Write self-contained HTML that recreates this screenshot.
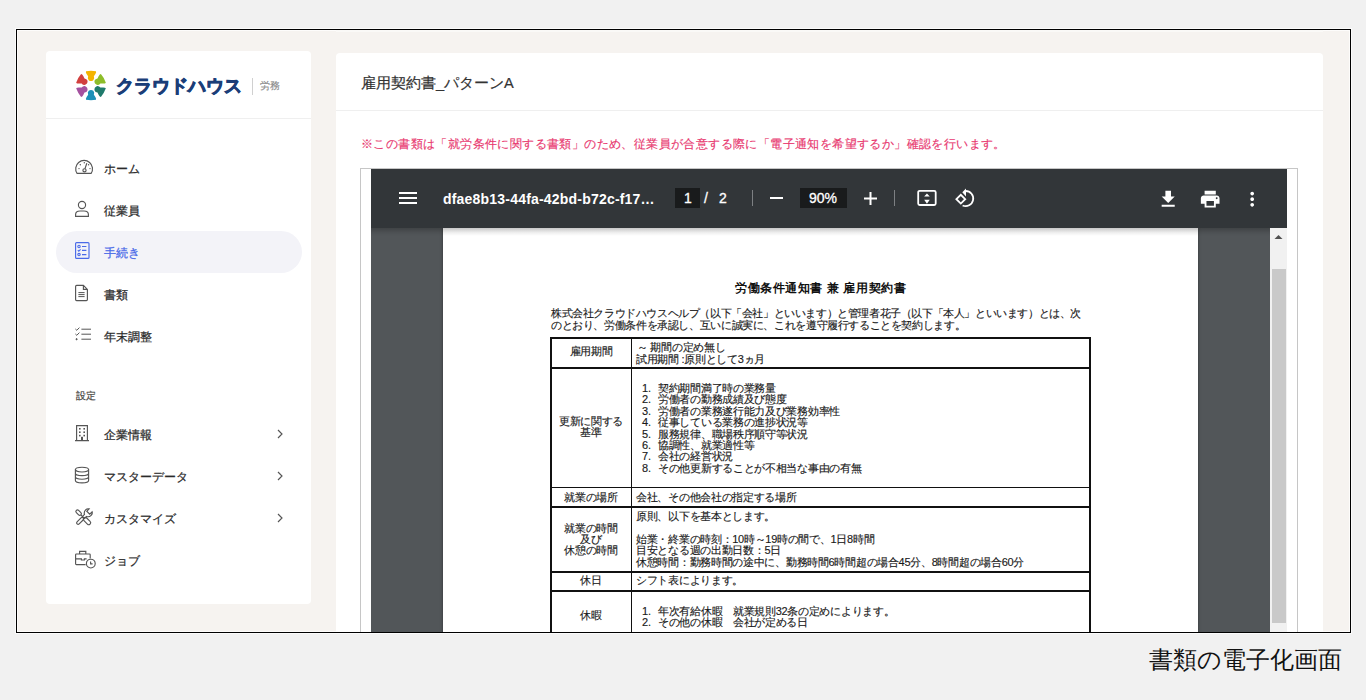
<!DOCTYPE html>
<html><head><meta charset="utf-8">
<style>
*{margin:0;padding:0;box-sizing:border-box}
html,body{width:1366px;height:700px;overflow:hidden;background:#f1f1f1;font-family:"Liberation Sans",sans-serif;color:#333}
.a{position:absolute;white-space:nowrap}
#frame{position:absolute;left:16px;top:29px;width:1335px;height:604px;border:1px solid #000;background:#f6f3f0;box-shadow:0 0 0 1px #fbfbfb, inset 0 0 0 1px #fdfcfb}
#clip{position:absolute;left:0;top:0;width:1366px;height:700px;clip-path:inset(30px 16px 68px 17px)}
.card{position:absolute;background:#fff;border-radius:4px}
.nav{font-size:12.2px;line-height:13px;font-weight:normal;-webkit-text-stroke:0.25px currentColor;color:#2a2a2a;left:104px}
.ico{position:absolute;fill:none;stroke:#555;stroke-width:1.15}
.doc{font-size:11px;line-height:11.4px;letter-spacing:-0.3px;color:#1a1a1a;-webkit-text-stroke:0.15px #1a1a1a}
.ctr{text-align:center;width:80px;left:551px}
.hl{position:absolute;left:551px;width:540px;height:1.5px;background:#111}
.vl{position:absolute;width:1.5px;background:#111}
.tb{fill:#fff}
.n{display:inline-block;width:16px;letter-spacing:0}
</style></head><body>
<div id="frame"></div>
<div id="clip">
  <!-- faint strip at top -->
  <div class="a" style="left:336px;top:30px;width:987px;height:2px;background:#faf9f7"></div>
  <!-- sidebar -->
  <div class="card" style="left:46px;top:51px;width:264.5px;height:552.5px"></div>
  <svg class="a" style="left:75.6px;top:69.5px" width="30" height="31" viewBox="-15.75 -16.25 31.5 32.5">
    <defs><path id="pp" d="M-5.2,-15 Q0,-16 5.2,-15 Q5.8,-14 4.6,-12 L3,-9.6 Q4,-7.4 2.4,-5.6 Q0,-3.8 -2.4,-5.6 Q-4,-7.4 -3,-9.6 L-4.6,-12 Q-5.8,-14 -5.2,-15Z"/></defs>
    <use href="#pp" fill="#f4b400"/>
    <use href="#pp" fill="#8dbd2a" transform="rotate(60)"/>
    <use href="#pp" fill="#1f7a6c" transform="rotate(120)"/>
    <use href="#pp" fill="#1b90b8" transform="rotate(180)"/>
    <use href="#pp" fill="#a4519f" transform="rotate(240)"/>
    <use href="#pp" fill="#d2403f" transform="rotate(300)"/>
  </svg>
  <div class="a" style="left:116px;top:77px;font-size:18px;line-height:18px;font-weight:bold;color:#1b3e78;letter-spacing:0px;-webkit-text-stroke:0.9px #1b3e78">クラウドハウス</div>
  <div class="a" style="left:252px;top:78px;width:1px;height:17px;background:#d0d0d0"></div>
  <div class="a" style="left:260px;top:81px;font-size:10px;line-height:10px;color:#8a8a8a;-webkit-text-stroke:0.15px #8a8a8a">労務</div>
  <div class="a" style="left:46px;top:118px;width:265px;height:1px;background:#efefef"></div>

  <!-- nav -->
  <svg class="ico" style="left:74px;top:158px" width="21" height="18" viewBox="0 0 21 18">
    <path d="M3.0,15.3 A8.4,8.4 0 1 1 17.2,15.3 Z"/>
    <circle cx="10.5" cy="12.3" r="1.6"/><path d="M11,10.7 L12.8,5.2"/>
    <g fill="#555" stroke="none"><circle cx="5" cy="10.6" r=".7"/><circle cx="6.3" cy="6.8" r=".7"/><circle cx="10.3" cy="4.8" r=".7"/><circle cx="14.6" cy="6.8" r=".7"/><circle cx="16" cy="10.6" r=".7"/></g>
  </svg>
  <div class="a nav" style="top:163px">ホーム</div>

  <svg class="ico" style="left:74px;top:200px" width="16" height="18" viewBox="0 0 16 18">
    <circle cx="8" cy="5" r="3.6"/><path d="M1.6,16.4 L1.6,14.6 Q1.6,11 6,11 L10,11 Q14.4,11 14.4,14.6 L14.4,16.4Z"/>
  </svg>
  <div class="a nav" style="top:205px">従業員</div>

  <div class="a" style="left:56px;top:231px;width:246px;height:42px;border-radius:21px;background:#f3f3f8"></div>
  <svg class="ico" style="left:74px;top:241px;stroke:#4a6ae8" width="16" height="19" viewBox="0 0 16 19">
    <rect x="1.6" y="1.6" width="13.4" height="15.8" rx="1"/>
    <g stroke-width="1.1"><circle cx="5" cy="5.5" r="1.2"/><path d="M3.8,9.2 L4.8,10.2 L6.6,8.4"/><circle cx="5" cy="13.6" r="1.2"/><path d="M8,5.5 H12.4 M8,9.4 H12.4 M8,13.6 H12.4"/></g>
  </svg>
  <div class="a nav" style="top:247px;color:#4a6ae8">手続き</div>

  <svg class="ico" style="left:74px;top:284px" width="15" height="18" viewBox="0 0 15 18">
    <path d="M1.6,2.4 Q1.6,1.4 2.6,1.4 L9.4,1.4 L13.4,5.4 L13.4,15.6 Q13.4,16.6 12.4,16.6 L2.6,16.6 Q1.6,16.6 1.6,15.6Z M9.4,1.4 L9.4,5.4 L13.4,5.4"/>
    <path d="M4.4,8.6 H10.6 M4.4,10.6 H10.6 M4.4,12.6 H10.6" stroke-width="1"/>
  </svg>
  <div class="a nav" style="top:289px">書類</div>

  <svg class="ico" style="left:74px;top:326px;stroke-width:1" width="18" height="16" viewBox="0 0 18 16">
    <path d="M1.4,3 L2.8,4.3 L5.4,1.6 M1.4,8 L2.8,9.3 L5.4,6.6 M7.4,3.2 H17 M7.4,8.2 H17 M7.4,13.2 H17"/>
    <circle cx="2.6" cy="13.2" r=".6" fill="#555"/>
  </svg>
  <div class="a nav" style="top:331px">年末調整</div>

  <div class="a" style="left:76px;top:391px;font-size:10px;line-height:10px;color:#4a4a45;-webkit-text-stroke:0.2px #4a4a45">設定</div>

  <svg class="ico" style="left:74px;top:424px" width="16" height="18" viewBox="0 0 16 18">
    <path d="M2.6,16.4 V1.6 H13.4 V16.4 M1,16.6 H15"/>
    <g fill="#555" stroke="none"><rect x="5" y="4" width="1.6" height="1.6"/><rect x="9.4" y="4" width="1.6" height="1.6"/><rect x="5" y="7.4" width="1.6" height="1.6"/><rect x="9.4" y="7.4" width="1.6" height="1.6"/><rect x="5" y="10.8" width="1.6" height="1.6"/><rect x="9.4" y="10.8" width="1.6" height="1.6"/><rect x="7" y="12.8" width="2" height="3.8"/></g>
  </svg>
  <div class="a nav" style="top:429px">企業情報</div>
  <svg class="ico" style="left:275px;top:428px" width="10" height="12" viewBox="0 0 10 12"><path d="M3,2 L7,6 L3,10"/></svg>

  <svg class="ico" style="left:74px;top:466px" width="16" height="18" viewBox="0 0 16 18">
    <ellipse cx="8" cy="3.6" rx="6.6" ry="2.4"/><path d="M1.4,3.6 V14.4 A6.6,2.4 0 0 0 14.6,14.4 V3.6 M1.4,7.2 A6.6,2.4 0 0 0 14.6,7.2 M1.4,10.8 A6.6,2.4 0 0 0 14.6,10.8"/>
  </svg>
  <div class="a nav" style="top:471px">マスターデータ</div>
  <svg class="ico" style="left:275px;top:470px" width="10" height="12" viewBox="0 0 10 12"><path d="M3,2 L7,6 L3,10"/></svg>

  <svg class="ico" style="left:74px;top:508px" width="19" height="19" viewBox="0 0 19 19">
    <g transform="rotate(-45 9.5 9.5)">
      <rect x="7.9" y="-0.6" width="3.2" height="6.4" rx="1.6"/>
      <path d="M9.5,5.8 V10.2"/>
      <rect x="7.6" y="10.2" width="3.8" height="8.6" rx="1.9"/>
    </g>
    <g transform="rotate(45 9.5 9.5)">
      <rect x="8" y="10" width="3" height="8.6" rx="1.5"/>
      <path d="M8,10 V6.6 Q5.6,5.4 5.6,2.6 Q5.6,0.4 7.4,-0.6 V2.8 H11.6 V-0.6 Q13.4,0.4 13.4,2.6 Q13.4,5.4 11,6.6 V10"/>
    </g>
  </svg>
  <div class="a nav" style="top:513px">カスタマイズ</div>
  <svg class="ico" style="left:275px;top:512px" width="10" height="12" viewBox="0 0 10 12"><path d="M3,2 L7,6 L3,10"/></svg>

  <svg class="ico" style="left:74px;top:550px" width="22" height="19" viewBox="0 0 22 19">
    <path d="M11.6,14.6 H2.4 Q1.6,14.6 1.6,13.8 V4.8 Q1.6,4 2.4,4 H15.4 Q16.2,4 16.2,4.8 V8.4 M5.6,4 V1.4 H11.8 V4 M1.6,8.8 H7.4 V10 H10.4 V8.8 H12.6"/>
    <circle cx="16.8" cy="13.6" r="4.4"/><path d="M16.6,11.4 V13.8 H18.6"/>
  </svg>
  <div class="a nav" style="top:555px">ジョブ</div>

  <!-- main card -->
  <div class="card" style="left:336px;top:53px;width:987px;height:640px"></div>
  <div class="a" style="left:361px;top:75.5px;font-size:14.6px;line-height:15px;color:#333;-webkit-text-stroke:0.2px #333">雇用契約書_パターンA</div>
  <div class="a" style="left:336px;top:110px;width:987px;height:1px;background:#efefef"></div>
  <div class="a" style="left:361px;top:138px;font-size:12px;line-height:13px;letter-spacing:0.4px;color:#e8386f;-webkit-text-stroke:0.15px #e8386f">※この書類は「就労条件に関する書類」のため、従業員が合意する際に「電子通知を希望するか」確認を行います。</div>

  <!-- PDF viewer -->
  <div class="a" style="left:360px;top:168px;width:938px;height:500px;border:1px solid #c6c6c6;background:#fff"></div>
  <div class="a" style="left:371px;top:228px;width:900px;height:420px;background:#525659"></div>
  <div class="a" style="left:443px;top:228px;width:755px;height:420px;background:#fff;box-shadow:0 0 3px rgba(0,0,0,.4)"></div>
  <!-- scrollbar -->
  <div class="a" style="left:1270px;top:228px;width:17px;height:420px;background:#f1f1f1"></div>
  <div class="a" style="left:1272px;top:269px;width:14px;height:354px;background:#c9c9c9"></div>
  <svg class="a" style="left:1270px;top:230px" width="17" height="12"><path d="M4.5,9 L8.5,5 L12.5,9Z" fill="#505050"/></svg>
  <!-- toolbar -->
  <div class="a" style="left:371px;top:169px;width:916px;height:59px;background:#323639"></div>
  <div class="a" style="left:371px;top:228px;width:899px;height:8px;background:linear-gradient(rgba(0,0,0,.22),rgba(0,0,0,.06) 60%,rgba(0,0,0,0))"></div>
  <svg class="a tb" style="left:396px;top:186px" width="24" height="24" viewBox="0 0 24 24"><path d="M3,18h18v-2H3v2zm0-5h18v-2H3v2zm0-7v2h18V6H3z"/></svg>
  <div class="a" style="left:443px;top:190.5px;font-size:14px;line-height:16px;font-weight:bold;color:#fff;letter-spacing:0.2px">dfae8b13-44fa-42bd-b72c-f17…</div>
  <div class="a" style="left:675px;top:188px;width:25px;height:20px;background:#191b1c"></div>
  <div class="a" style="left:684px;top:190px;font-size:14px;line-height:16px;color:#fff;-webkit-text-stroke:0.3px #fff">1</div>
  <div class="a" style="left:704px;top:190px;font-size:14px;line-height:16px;color:#fff;-webkit-text-stroke:0.3px #fff">/</div>
  <div class="a" style="left:719px;top:190px;font-size:14px;line-height:16px;color:#fff;-webkit-text-stroke:0.3px #fff">2</div>
  <div class="a" style="left:752px;top:190px;width:1px;height:16px;background:#7d8083"></div>
  <div class="a" style="left:770px;top:197px;width:13px;height:2px;background:#fff"></div>
  <div class="a" style="left:800px;top:188px;width:47px;height:20px;background:#191b1c"></div>
  <div class="a" style="left:809px;top:190px;font-size:14px;line-height:16px;color:#fff;-webkit-text-stroke:0.3px #fff">90%</div>
  <svg class="a tb" style="left:862px;top:190px" width="17" height="17" viewBox="0 0 17 17"><path d="M7.5,2h2v5.5H15v2H9.5V15h-2V9.5H2v-2h5.5z"/></svg>
  <div class="a" style="left:894px;top:190px;width:1px;height:16px;background:#7d8083"></div>
  <svg class="a" style="left:915px;top:188px" width="24" height="21" viewBox="0 0 24 21">
    <rect x="3.2" y="2.8" width="17.5" height="14.2" rx="1.5" fill="none" stroke="#fff" stroke-width="1.8"/>
    <path d="M11.95,5.5 L14.75,8.6 H9.15Z M11.95,15.7 L14.75,11.7 H9.15Z" fill="#fff"/>
  </svg>
  <svg class="a" style="left:953px;top:186px" width="24" height="24" viewBox="0 0 24 24">
    <path d="M3.4,13.2 L7.8,8.8 L12.2,13.2 L7.8,17.6Z" fill="none" stroke="#fff" stroke-width="1.8"/>
    <path d="M12.65,5 A7.55,7.55 0 1 1 9.6,19.45" fill="none" stroke="#fff" stroke-width="1.8"/>
    <path d="M9.3,6.2 L13,2.4 L13,10.6Z" fill="#fff"/>
  </svg>
  <svg class="a tb" style="left:1156.6px;top:188px" width="22.4" height="22.4" viewBox="0 0 24 24"><path d="M19 9h-4V3H9v6H5l7 7 7-7zM5 18v2h14v-2H5z"/></svg>
  <svg class="a tb" style="left:1198.8px;top:187.6px" width="22.4" height="22.4" viewBox="0 0 24 24"><path d="M19 8H5c-1.66 0-3 1.34-3 3v6h4v4h12v-4h4v-6c0-1.66-1.34-3-3-3zm-3 11H8v-5h8v5zm3-7c-.55 0-1-.45-1-1s.45-1 1-1 1 .45 1 1-.45 1-1 1zm1-9H6v4h12V3z"/></svg>
  <svg class="a tb" style="left:1240.8px;top:187.8px" width="22.4" height="22.4" viewBox="0 0 24 24"><path d="M12 8c1.1 0 2-.9 2-2s-.9-2-2-2-2 .9-2 2 .9 2 2 2zm0 2c-1.1 0-2 .9-2 2s.9 2 2 2 2-.9 2-2-.9-2-2-2zm0 6c-1.1 0-2 .9-2 2s.9 2 2 2 2-.9 2-2-.9-2-2-2z"/></svg>

  <!-- document -->
  <div class="a" style="left:735px;top:282px;font-size:12px;line-height:12px;letter-spacing:0.57px;font-weight:bold;color:#111">労働条件通知書 兼 雇用契約書</div>
  <div class="a doc" style="left:551px;top:308px;letter-spacing:-0.4px">株式会社クラウドハウスヘルプ（以下「会社」といいます）と管理者花子（以下「本人」といいます）とは、次</div>
  <div class="a doc" style="left:551px;top:319.5px;letter-spacing:-0.38px">のとおり、労働条件を承認し、互いに誠実に、これを遵守履行することを契約します。</div>

  <div class="hl" style="top:337px"></div>
  <div class="hl" style="top:367px"></div>
  <div class="hl" style="top:486.5px"></div>
  <div class="hl" style="top:506px"></div>
  <div class="hl" style="top:571px"></div>
  <div class="hl" style="top:590px"></div>
  <div class="vl" style="left:550.4px;top:337px;height:300px"></div>
  <div class="vl" style="left:630.5px;top:337px;height:300px"></div>
  <div class="vl" style="left:1089.2px;top:337px;height:300px"></div>

  <div class="a doc ctr" style="top:346px">雇用期間</div>
  <div class="a doc" style="left:637px;top:342px">～ 期間の定め無し</div>
  <div class="a doc" style="left:636px;top:353.5px">試用期間 :原則として3ヵ月</div>

  <div class="a doc ctr" style="top:416px">更新に関する<br>基準</div>
  <div class="a doc" style="left:642px;top:383px"><span class="n">1.</span>契約期間満了時の業務量<br><span class="n">2.</span>労働者の勤務成績及び態度<br><span class="n">3.</span>労働者の業務遂行能力及び業務効率性<br><span class="n">4.</span>従事している業務の進捗状況等<br><span class="n">5.</span>服務規律、職場秩序順守等状況<br><span class="n">6.</span>協調性、就業適性等<br><span class="n">7.</span>会社の経営状況<br><span class="n">8.</span>その他更新することが不相当な事由の有無</div>

  <div class="a doc ctr" style="top:492px">就業の場所</div>
  <div class="a doc" style="left:636px;top:492px">会社、その他会社の指定する場所</div>

  <div class="a doc ctr" style="top:522.5px">就業の時間<br>及び<br>休憩の時間</div>
  <div class="a doc" style="left:636px;top:510.5px">原則、以下を基本とします。</div>
  <div class="a doc" style="left:636px;top:534px">始業・終業の時刻：10時～19時の間で、1日8時間<br>目安となる週の出勤日数：5日<br>休憩時間：勤務時間の途中に、勤務時間6時間超の場合45分、8時間超の場合60分</div>

  <div class="a doc ctr" style="top:575px">休日</div>
  <div class="a doc" style="left:636px;top:575px">シフト表によります。</div>

  <div class="a doc ctr" style="top:610px">休暇</div>
  <div class="a doc" style="left:642px;top:606px"><span class="n">1.</span>年次有給休暇　就業規則32条の定めによります。<br><span class="n">2.</span>その他の休暇　会社が定める日</div>
</div>
<div class="a" style="left:1149px;top:648px;font-size:23.6px;line-height:24px;color:#111">書類の電子化画面</div>
</body></html>
